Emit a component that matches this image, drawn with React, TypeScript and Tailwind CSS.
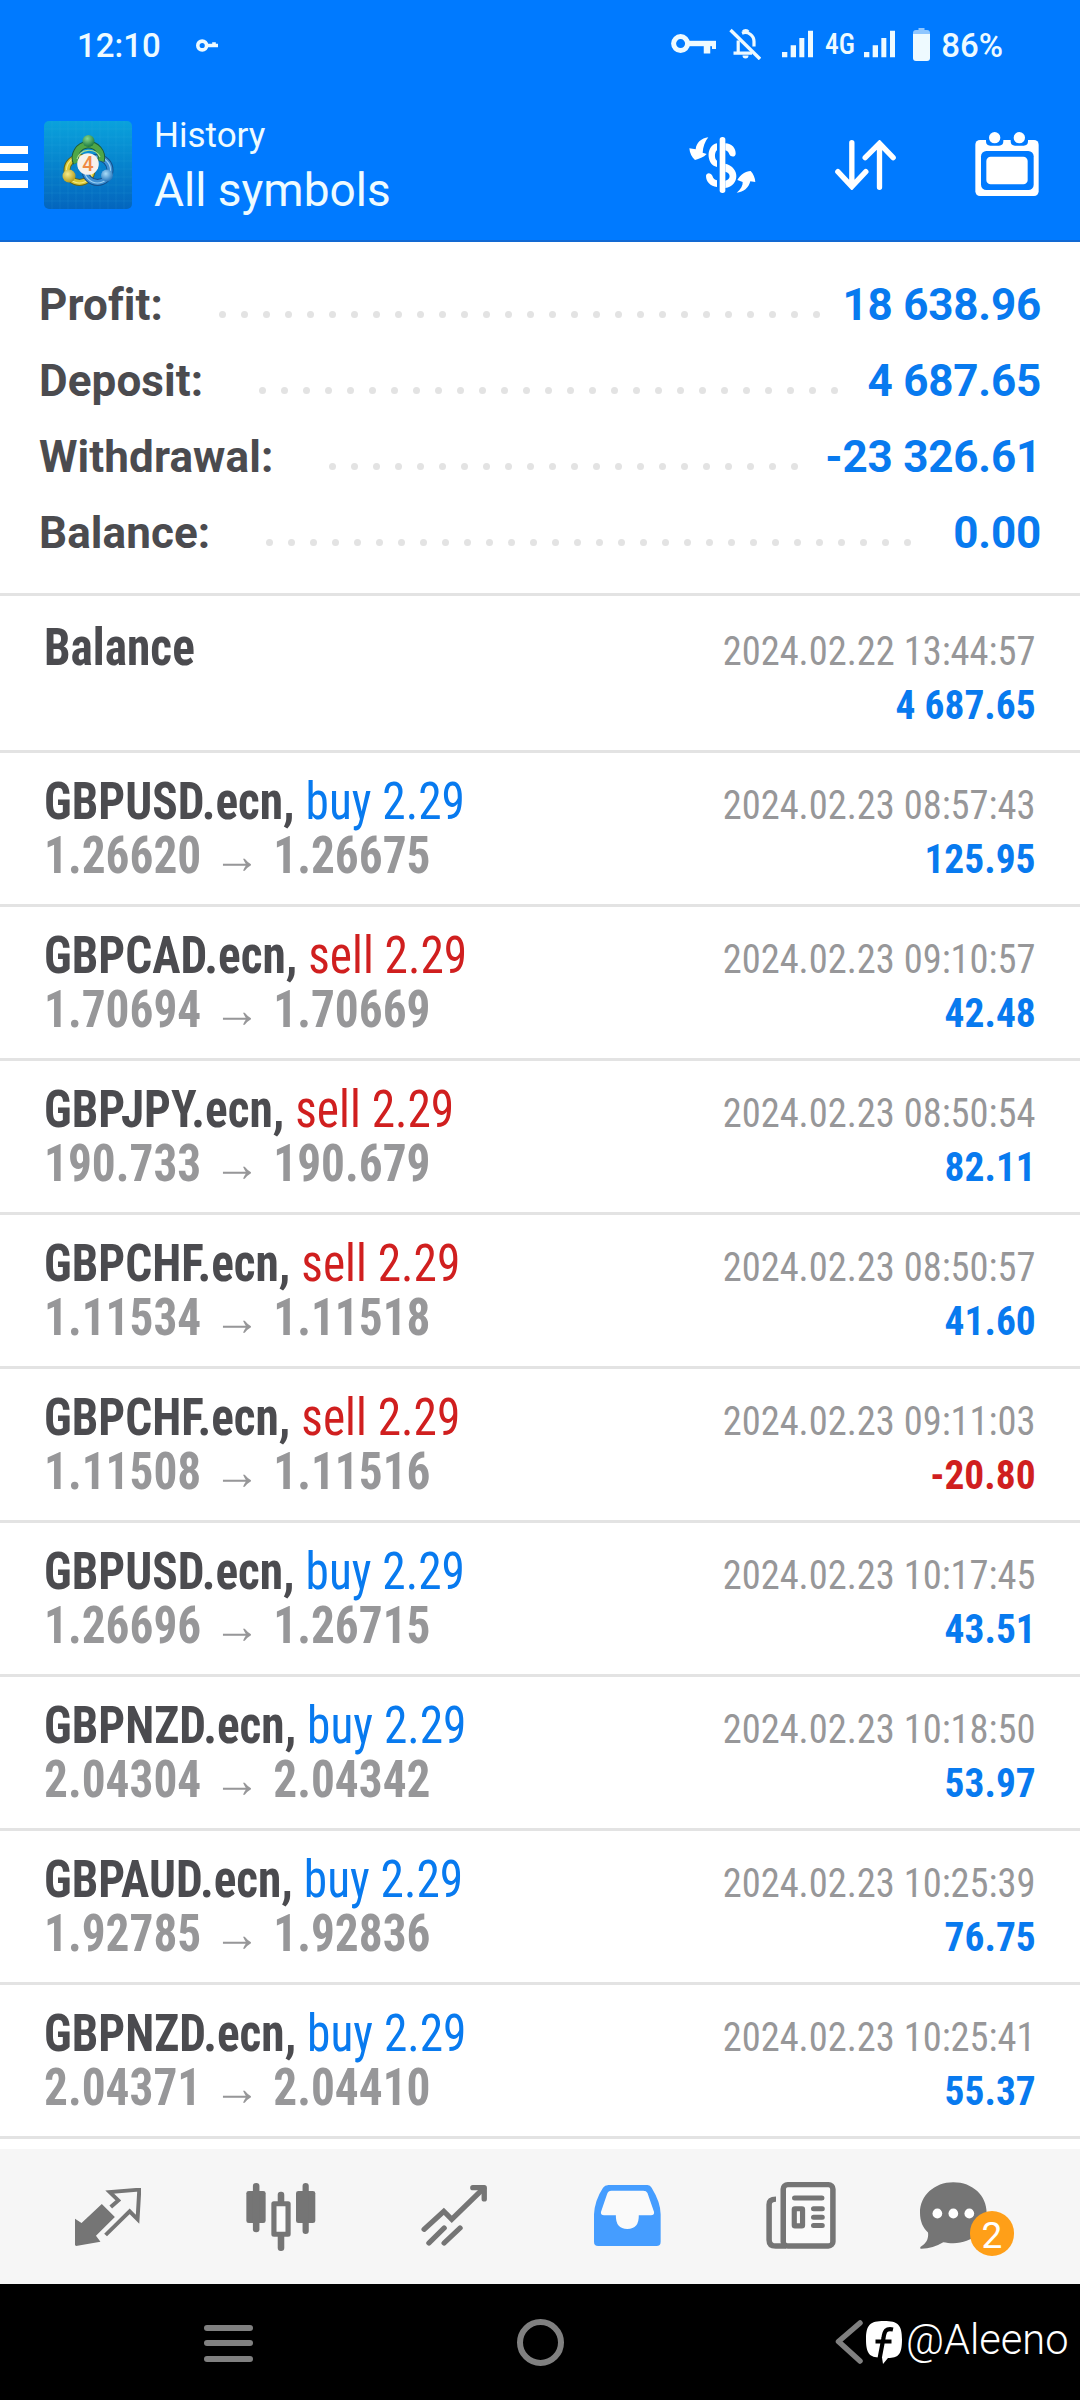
// src/App.tsx
import React from 'react';

interface ISummary {
  label: string;
  value: string;
  dots: number;
}

interface IDeal {
  symbol: string;
  side?: 'buy' | 'sell';
  volume?: string;
  open?: string;
  close?: string;
  time: string;
  profit: string;
}

const summary: ISummary[] = [
  { label: 'Profit:', value: '18 638.96', dots: 28 },
  { label: 'Deposit:', value: '4 687.65', dots: 27 },
  { label: 'Withdrawal:', value: '-23 326.61', dots: 22 },
  { label: 'Balance:', value: '0.00', dots: 30 },
];

const deals: IDeal[] = [
  { symbol: 'Balance', time: '2024.02.22 13:44:57', profit: '4 687.65' },
  { symbol: 'GBPUSD.ecn', side: 'buy', volume: '2.29', open: '1.26620', close: '1.26675', time: '2024.02.23 08:57:43', profit: '125.95' },
  { symbol: 'GBPCAD.ecn', side: 'sell', volume: '2.29', open: '1.70694', close: '1.70669', time: '2024.02.23 09:10:57', profit: '42.48' },
  { symbol: 'GBPJPY.ecn', side: 'sell', volume: '2.29', open: '190.733', close: '190.679', time: '2024.02.23 08:50:54', profit: '82.11' },
  { symbol: 'GBPCHF.ecn', side: 'sell', volume: '2.29', open: '1.11534', close: '1.11518', time: '2024.02.23 08:50:57', profit: '41.60' },
  { symbol: 'GBPCHF.ecn', side: 'sell', volume: '2.29', open: '1.11508', close: '1.11516', time: '2024.02.23 09:11:03', profit: '-20.80' },
  { symbol: 'GBPUSD.ecn', side: 'buy', volume: '2.29', open: '1.26696', close: '1.26715', time: '2024.02.23 10:17:45', profit: '43.51' },
  { symbol: 'GBPNZD.ecn', side: 'buy', volume: '2.29', open: '2.04304', close: '2.04342', time: '2024.02.23 10:18:50', profit: '53.97' },
  { symbol: 'GBPAUD.ecn', side: 'buy', volume: '2.29', open: '1.92785', close: '1.92836', time: '2024.02.23 10:25:39', profit: '76.75' },
  { symbol: 'GBPNZD.ecn', side: 'buy', volume: '2.29', open: '2.04371', close: '2.04410', time: '2024.02.23 10:25:41', profit: '55.37' },
];

const Signal = ({ className }: { className: string }) => (
  <svg className={`h-[28px] w-[31px] ${className}`} viewBox="0 0 93 84" fill="currentColor">
    <path d="M0 66h16v16H0zM26 46h16v36H26zM52 24h15v58H52zM78 2h15v80H78z" />
  </svg>
);

const StatusBar = () => (
  <div className="flex h-[91px] items-center pl-[77px] pr-[77px] text-[#eefaff]">
    <span className="w-[84px] text-[33px] font-medium">12:10</span>
    <svg className="ml-[35px] h-[13px] w-[22px]" viewBox="0 0 22 13" fill="none" stroke="currentColor" strokeWidth="3.6">
      <circle cx="6.2" cy="6.5" r="4.4" />
      <path d="M10 6.5h12M18 7V3.2" />
    </svg>
    <svg className="ml-auto -mt-[3px] h-[20px] w-[45px]" viewBox="0 0 45 20" fill="none" stroke="currentColor">
      <circle cx="9.6" cy="9.6" r="7" strokeWidth="5" />
      <path d="M17 9.5h28" strokeWidth="5.4" />
      <path d="M36 9v10.5" strokeWidth="6.5" />
      <path d="M43 9v6" strokeWidth="4" />
    </svg>
    <svg className="-mt-[3px] ml-[13px] h-[32px] w-[32px]" viewBox="0 0 32 32" fill="none" stroke="currentColor" strokeWidth="3.2">
      <path d="M9.2 12.5V24.5M4.5 25.2H23M13 5.2C19 2.8 25 7.5 25 13.5V18.5" />
      <path d="M1.5 2L31 31" strokeWidth="3.4" />
      <path d="M14.2 4a3 3 0 0 1 5 0" />
      <path d="M13.5 27.5h6a3 3 0 0 1-6 0z" fill="currentColor" stroke="none" />
    </svg>
    <Signal className="-mt-[3px] ml-[21px]" />
    <span className="-mt-[4px] ml-[12px] w-[28px] origin-left scale-x-[0.92] font-['Roboto_Condensed'] text-[30px] leading-[30px] font-medium">4G</span>
    <Signal className="-mt-[3px] ml-[11px]" />
    <svg className="-mt-[3px] ml-[18px] h-[33px] w-[17px]" viewBox="0 0 17 33">
      <path d="M5.5 0h6v2H14a3 3 0 0 1 3 3v3H0V5a3 3 0 0 1 3-3h2.5z" fill="#8fc6ff" />
      <path d="M0 6h17v24a3 3 0 0 1-3 3H3a3 3 0 0 1-3-3z" fill="currentColor" />
    </svg>
    <span className="ml-[11px] text-[33px] font-medium">86%</span>
  </div>
);

const Logo = () => (
  <svg className="h-[88px] w-[88px]" viewBox="0 0 88 88">
    <defs>
      <linearGradient id="tile" x1="0" y1="0" x2="0" y2="1">
        <stop offset="0" stopColor="#0aa2dc" />
        <stop offset="0.5" stopColor="#0683cd" />
        <stop offset="1" stopColor="#0465bd" />
      </linearGradient>
      <radialGradient id="green" cx="0.4" cy="0.3" r="0.7">
        <stop offset="0" stopColor="#86d68a" />
        <stop offset="1" stopColor="#1b7a41" />
      </radialGradient>
      <radialGradient id="yellow" cx="0.4" cy="0.35" r="0.7">
        <stop offset="0" stopColor="#f6ec8e" />
        <stop offset="1" stopColor="#b09612" />
      </radialGradient>
      <radialGradient id="blue" cx="0.4" cy="0.35" r="0.7">
        <stop offset="0" stopColor="#a9dcf8" />
        <stop offset="1" stopColor="#1d6fb8" />
      </radialGradient>
    </defs>
    <rect width="88" height="88" rx="5" fill="url(#tile)" />
    <path
      d="M8 0v88M16 0v88M24 0v88M32 0v88M40 0v88M48 0v88M56 0v88M64 0v88M72 0v88M80 0v88M0 8h88M0 16h88M0 24h88M0 32h88M0 40h88M0 48h88M0 56h88M0 64h88M0 72h88M0 80h88"
      stroke="#4cc0f0"
      strokeOpacity="0.1"
      strokeWidth="1"
    />
    <g fill="none">
      <circle cx="35.5" cy="49" r="12.5" stroke="#5f6520" strokeWidth="7" />
      <circle cx="35.5" cy="49" r="12.5" stroke="#d9c833" strokeWidth="5" />
      <circle cx="35.5" cy="49" r="13" stroke="#f3ea8a" strokeWidth="1.2" />
      <circle cx="53.5" cy="49" r="12.5" stroke="#134f8c" strokeWidth="7" />
      <circle cx="53.5" cy="49" r="12.5" stroke="#3e8fd2" strokeWidth="5" />
      <circle cx="53.5" cy="49" r="13" stroke="#9bd0f3" strokeWidth="1.2" />
      <path d="M32.500 42A13 13 0 1 1 57 40" stroke="#1d5c3a" strokeWidth="7.500" />
      <path d="M32.500 42A13 13 0 1 1 57 40" stroke="#4fa747" strokeWidth="5.500" />
      <path d="M33 38A12.500 12.500 0 0 1 56 36" stroke="#a6dc92" strokeWidth="1.200" />
    </g>
    <circle cx="44.5" cy="20" r="6" fill="url(#green)" />
    <circle cx="25" cy="55" r="6.5" fill="url(#yellow)" />
    <circle cx="63" cy="54.5" r="6" fill="url(#blue)" />
    <circle cx="44" cy="43" r="10.8" fill="#f6f1ec" />
    <text x="44" y="50" textAnchor="middle" fontSize="20" fontFamily="Roboto" fontWeight="500" fill="#ef8a45">4</text>
  </svg>
);

const Header = () => (
  <header className="h-[242px] border-b-2 border-[#1269d3] bg-[#007aff]">
    <StatusBar />
    <div className="flex h-[149px] items-start">
      <div className="mt-[55px] flex w-[28px] flex-col gap-[9px]">
        <div className="h-[8px] bg-white" />
        <div className="h-[8px] bg-white" />
        <div className="h-[8px] bg-white" />
      </div>
      <div className="ml-[16px] mt-[30px]">
        <Logo />
      </div>
      <div className="ml-[22px] mt-[23px] text-[#eefbff]">
        <div className="text-[35px] leading-[44px]">History</div>
        <div className="mt-[4px] text-[46px] leading-[56px]">All symbols</div>
      </div>

      {/* money, sort and period actions */}
      <svg className="ml-auto mt-[46px] h-[56px] w-[67px]" viewBox="146 411 201 168" fill="white">
        <path d="M204 412C183 415 168 428 166 448L147 445C148 460 155 473 164 480C176 477 190 472 199 462L187 458C188 440 194 424 204 412z" />
        <path d="M289 578C302 567 308 556 307 546L291 540C301 524 315 513 331 513C339 522 344 533 345 546L330 544C325 564 310 576 289 578z" />
        <rect x="238" y="411" width="17" height="168" rx="8" />
        <path d="M230 430V451C222 456 222 478 230 482V501C197 495 196 436 230 430z" />
        <path d="M255 430C275 430 287 446 286 462C285 472 271 472 267 463C265 456 260 452 255 451z" />
        <path d="M255 491C299 501 299 557 255 564V542C272 538 272 519 255 515z" />
        <path d="M230 561C210 558 197 545 197 527C198 517 212 517 216 527C219 536 223 539 230 541z" />
      </svg>
      <svg className="ml-[79px] mt-[49px] h-[50px] w-[61px]" viewBox="584 420 182 150" fill="none" stroke="white" strokeWidth="16" strokeLinecap="round">
        <path d="M634 428V557M592 515L634 560L676 515" />
        <path d="M717 562V433M674 473L717 430L758 473" />
      </svg>
      <svg className="ml-[79px] mr-[41px] mt-[41px] h-[64px] w-[64px]" viewBox="1004 396 192 192">
        <rect x="1005" y="420" width="190" height="168" rx="14" fill="white" />
        <path d="M1037 412V424Q1037 437 1050 437H1076Q1089 437 1089 424V412zM1111 412V424Q1111 437 1124 437H1150Q1163 437 1163 424V412z" fill="#007aff" />
        <circle cx="1063" cy="413" r="17" fill="white" />
        <circle cx="1137" cy="413" r="17" fill="white" />
        <rect x="1022" y="453" width="158" height="117" rx="16" fill="#007aff" />
        <rect x="1038" y="470" width="124" height="83" rx="13" fill="white" />
      </svg>
    </div>
  </header>
);

const Summary = () => (
  <section className="border-b-[3px] border-[#e3e3e3] pb-[22px] pl-[39px] pr-[39px] pt-[25px] text-[44px] font-bold leading-[76px]">
    {summary.map((row) => (
      <div key={row.label} className="flex h-[76px] items-start">
        <span className="tracking-[0.1px] text-[#4b4b4f]">{row.label}</span>
        <div className="ml-[56px] mt-[44px] flex gap-[15px]">
          {Array.from({ length: row.dots }).map((_, i) => (
            <span key={i} className="h-[7px] w-[7px] rounded-full bg-[#e3e3e3]" />
          ))}
        </div>
        <span className="ml-auto whitespace-nowrap tracking-[-0.2px] text-[#087aef]">{row.value}</span>
      </div>
    ))}
  </section>
);

const Deal: React.FC<{ deal: IDeal; first: boolean }> = ({ deal, first }) => (
  <div
    className={`flex justify-between border-b-[3px] border-[#e3e3e3] pl-[44px] pr-[44px] font-['Roboto_Condensed'] leading-[54px] ${
      first ? 'h-[157px] pt-[3px]' : 'h-[154px]'
    }`}
  >
    <div className="origin-left scale-x-[0.928] whitespace-nowrap pt-[22px] text-[51px]">
      <div>
        <span className="font-bold text-[#4b4b4f]">{deal.side ? `${deal.symbol},` : deal.symbol}</span>
        {deal.side && (
          <span className={deal.side === 'buy' ? 'text-[#087aef]' : 'text-[#d01f1f]'}>
            {' '}
            {deal.side} {deal.volume}
          </span>
        )}
      </div>
      {deal.open && (
        <div className="font-bold text-[#979799]">
          {deal.open} <span className="mx-[1.5px] font-['Roboto'] font-medium">→</span> {deal.close}
        </div>
      )}
    </div>
    <div className="flex flex-col items-end whitespace-nowrap pt-[25px] text-[41px]">
      <div className="origin-right scale-x-[0.938] text-[#979799]">{deal.time}</div>
      <div className={`origin-right scale-x-[0.962] font-bold ${deal.profit.startsWith('-') ? 'text-[#d01f1f]' : 'text-[#087aef]'}`}>
        {deal.profit}
      </div>
    </div>
  </div>
);

const TabBar = () => (
  <nav className="flex h-[135px] items-center bg-[#f6f6f6] pl-[75px] text-[#757575]">
    <svg className="h-[58px] w-[66px]" viewBox="219 203 192 174" preserveAspectRatio="none" fill="currentColor">
      <path d="M297 251L335 290L280 346L293 364L222 377L219 374V295L238 308z" />
      <path d="M323 260L345 240L320 215L406 208L401 297L378 273L308 344" fill="none" stroke="currentColor" strokeWidth="11.5" />
    </svg>
    <svg className="ml-[105px] h-[68px] w-[70px]" viewBox="715 186 203 204" preserveAspectRatio="none" fill="currentColor">
      <rect x="716" y="210" width="56" height="96" rx="7" />
      <rect x="735" y="186" width="19" height="148" rx="9" />
      <rect x="860" y="210" width="56" height="96" rx="7" />
      <rect x="879" y="186" width="18" height="153" rx="9" />
      <rect x="807" y="212" width="19" height="50" rx="9" />
      <rect x="807" y="320" width="19" height="70" rx="9" />
      <rect x="796" y="248" width="41" height="92" fill="#fafafa" stroke="currentColor" strokeWidth="15" strokeLinejoin="round" />
    </svg>
    <svg className="-mt-[2px] ml-[105px] h-[61px] w-[66px]" viewBox="1223 194 191 183" preserveAspectRatio="none" fill="none" stroke="currentColor" strokeWidth="15.5" strokeLinecap="round">
      <path d="M1232 327L1289 273L1312 297L1404 204" />
      <path d="M1373 202H1406V236" strokeLinejoin="round" />
      <path d="M1246 368L1290 323M1290 368L1336 323" />
    </svg>
    <svg className="-mt-[2px] ml-[107px] h-[61px] w-[67px] text-[#459dff]" viewBox="158 194 193 183" preserveAspectRatio="none">
      <path d="M200 194H312Q320 194 324 202Q350 246 350 282V364Q350 377 338 377H170Q158 377 158 364V282Q160 240 184 202Q189 194 200 194z" fill="currentColor" />
      <path d="M208 211H300Q309 211 312 218L331 275Q332 285 322 285H287Q288 326 254 326Q220 326 221 285H187Q177 285 178 275L196 220Q199 211 208 211z" fill="#fafafa" />
    </svg>
    <svg className="-mt-[2px] ml-[105px] h-[67px] w-[70px]" viewBox="656 185 203 200" preserveAspectRatio="none" fill="none" stroke="currentColor" strokeWidth="16">
      <rect x="706" y="193" width="144" height="183" rx="13" fill="#fafafa" />
      <path d="M685 236Q665 236 665 252V358Q665 376 684 376H715" />
      <path d="M739 233H818M794 265H819M794 290H819M794 315H819" strokeLinecap="round" strokeWidth="15" />
      <rect x="738" y="265" width="24" height="51" rx="2" strokeWidth="15" />
    </svg>
    <div className="relative -mt-[2px] ml-[84px]">
      <svg className="h-[67px] w-[67px]" viewBox="1103 185 193 200" preserveAspectRatio="none">
        <path d="M1199 186C1255 186 1295 226 1295 277C1295 330 1255 367 1199 368C1188 368 1179 366 1170 365C1150 378 1130 384 1107 384C1101 384 1104 379 1107 377C1124 366 1128 350 1126 336C1111 321 1103 302 1103 277C1103 226 1144 186 1199 186z" fill="currentColor" />
        <ellipse cx="1153" cy="279" rx="14" ry="15" fill="white" />
        <ellipse cx="1199" cy="279" rx="14" ry="15" fill="white" />
        <ellipse cx="1245" cy="279" rx="14" ry="15" fill="white" />
      </svg>
      <span className="absolute left-[50px] top-[29px] flex h-[45px] w-[44px] items-center justify-center rounded-full bg-[#ff9f18] pt-[3px] text-[37px] leading-none text-white">
        2
      </span>
    </div>
  </nav>
);

const SystemBar = () => (
  <div className="flex h-[116px] items-center bg-black pl-[204px]">
    <div className="mt-[2px] flex w-[49px] flex-col gap-[9.5px]">
      <div className="h-[6px] rounded-full bg-[#808080]" />
      <div className="h-[6px] rounded-full bg-[#808080]" />
      <div className="h-[6px] rounded-full bg-[#808080]" />
    </div>
    <div className="ml-[264px] mt-[1px] h-[47px] w-[47px] rounded-full border-[6px] border-[#808080]" />
    <svg className="ml-[271px] h-[44px] w-[28px]" viewBox="0 0 28 44" fill="none" stroke="#808080" strokeWidth="5.5" strokeLinecap="round" strokeLinejoin="round">
      <path d="M25 3L3.5 21.5L25 41" />
    </svg>
    <svg className="ml-[3px] h-[43px] w-[36px]" viewBox="0 0 36 43">
      <path d="M18 0C32 0 36 4 36 18.5C36 34 32 37 22 37L17 43L16 36.5C4 37 0 33 0 18.5C0 4 4 0 18 0z" fill="white" />
      <path d="M27 8.5C20 7 18.5 10 17.5 17L13.5 38M9.5 20.5H25.5" fill="none" stroke="black" strokeWidth="4.2" />
    </svg>
    <span className="-mt-[5px] ml-[4px] origin-left scale-x-[0.99] text-[42px] font-light text-white">@Aleeno</span>
  </div>
);

export default function App() {
  return (
    <div className="h-[2400px] w-[1080px] overflow-hidden bg-white font-['Roboto',sans-serif]">
      <Header />
      <Summary />
      <main className="h-[1553px]">
        {deals.map((deal, i) => (
          <Deal key={i} deal={deal} first={i === 0} />
        ))}
      </main>
      <TabBar />
      <SystemBar />
    </div>
  );
}
